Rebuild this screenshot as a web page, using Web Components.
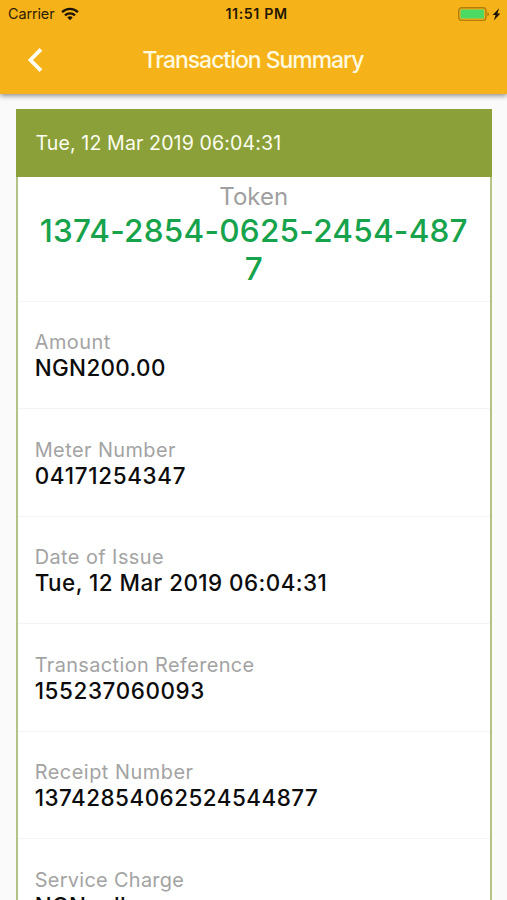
<!DOCTYPE html>
<html lang="en">
<head>
<meta charset="utf-8">
<title>Transaction Summary</title>
<style>
html,body{margin:0;height:100%;overflow:hidden;background:#fafafa}
body{font-family:Inter,"Noto Sans",sans-serif}
</style>
</head>
<body>
<summary-app></summary-app>

<template id="status-bar">
<style>
:host{display:grid;grid-template-columns:1fr auto 1fr;align-items:center;height:27px;color:#2b2007;padding:0 4px 0 8px}
.left,.right{display:flex;align-items:center}
.left{font-size:14.4px;letter-spacing:-.1px;gap:7px}
.time{font-size:14.2px;font-weight:600;letter-spacing:.62px;color:#1f1704;padding-left:2px}
.right{justify-content:flex-end}
svg{display:block}
</style>
<div class="left"><span>Carrier</span>
<svg width="18" height="14" viewBox="0 0 18 14" fill="none" stroke="#1c1503" stroke-width="2.3"><path d="M1.1 5.1a11.3 11.3 0 0 1 15.8 0"/><path d="M4 8.4a7.1 7.1 0 0 1 10 0"/><path d="M6.3 10.5a3.9 3.9 0 0 1 5.4 0L9 13.2z" fill="#1c1503" stroke="none"/></svg></div>
<div class="time">11:51 PM</div>
<div class="right">
<svg width="46" height="16" viewBox="0 0 46 16"><rect x="1.7" y="1.8" width="27.2" height="12.6" rx="2.8" fill="none" stroke="#b17d0d" stroke-width="1.4"/><rect x="3.5" y="3.6" width="23.6" height="9" rx="1.2" fill="#4cd964"/><path d="M30.4 6q1.6.4 1.6 2.1t-1.6 2.1z" fill="#a8770d"/><path d="M42.2 2.3l-6.6 6.7h3l-1.8 5.6 6.6-7.2h-3z" fill="#1a1303"/></svg></div>
</template>

<template id="app-bar">
<style>
:host{display:block;height:94px;background:#f6b319;box-shadow:0 2px 5px rgba(0,0,0,.42);position:relative;z-index:1}
.bar{display:grid;grid-template-columns:70px 1fr 71px;align-items:center;height:66px}
svg{display:block;justify-self:center}
h1{margin:0;text-align:center;color:#fff9df;font-size:23px;line-height:28px;font-weight:500;letter-spacing:-1.04px;white-space:nowrap}
</style>
<status-bar></status-bar>
<div class="bar">
<svg width="18" height="26" viewBox="0 0 18 26" fill="none" stroke="#fffdf2" stroke-width="3.8"><path d="M14.9 2.3L4.4 13l10.5 10.7"/></svg>
<h1><slot></slot></h1></div>
</template>

<template id="token-panel">
<style>
:host{display:block;height:124.6px;box-sizing:border-box;padding-top:5px;text-align:center;border-bottom:1px solid #f5f5f5}
.name{font-size:24px;line-height:30px;color:#a0a0a0}
.code{font-size:31.5px;line-height:38px;font-weight:500;letter-spacing:.24px;color:#16a34b;width:430px;margin:0 auto;white-space:nowrap}
</style>
<div class="name">Token</div>
<div class="code"><slot></slot></div>
</template>

<template id="detail-row">
<style>
:host{display:block;height:107.5px;box-sizing:border-box;padding:28.5px 0 0 17.2px;border-bottom:1px solid #f4f4f4;white-space:nowrap}
.label{font-size:19.9px;line-height:24px;color:#a3a3a3;letter-spacing:var(--label-tracking,.44px)}
.value{font-size:22.4px;line-height:28px;font-weight:500;color:#0c0c0c;letter-spacing:var(--value-tracking,.46px)}
</style>
<div class="label"><slot name="label"></slot></div>
<div class="value"><slot></slot></div>
</template>

<template id="receipt-card">
<style>
:host{display:block;margin:15px 15px 0 15.5px;height:1000px;background:#fff;border:solid #b4c285;box-sizing:border-box;border-width:0 2px}
header{margin:0 -2px;height:68px;box-sizing:border-box;padding-left:20px;background:#8ca039;color:#fbfdf0;font-size:19.6px;line-height:69px;letter-spacing:.1px}
</style>
<header><slot name="date"></slot></header>
<slot></slot>
</template>

<template id="summary-app">
<style>
:host{display:block;height:900px;overflow:hidden;background:#fafafa}
</style>
<app-bar>Transaction Summary</app-bar>
<receipt-card>
<span slot="date">Tue, 12 Mar 2019 06:04:31</span>
<token-panel>1374-2854-0625-2454-487<br>7</token-panel>
<detail-row style="--label-tracking:.5px;--value-tracking:.36px"><span slot="label">Amount</span>NGN200.00</detail-row>
<detail-row style="--value-tracking:.7px"><span slot="label">Meter Number</span>04171254347</detail-row>
<detail-row><span slot="label">Date of Issue</span>Tue, 12 Mar 2019 06:04:31</detail-row>
<detail-row style="--label-tracking:.39px;--value-tracking:.62px"><span slot="label">Transaction Reference</span>155237060093</detail-row>
<detail-row style="--label-tracking:.52px;--value-tracking:.5px"><span slot="label">Receipt Number</span>13742854062524544877</detail-row>
<detail-row style="--label-tracking:.32px;--value-tracking:.36px"><span slot="label">Service Charge</span>NGNnull</detail-row>
</receipt-card>
</template>

<script>
for (const name of ['status-bar', 'app-bar', 'token-panel', 'detail-row', 'receipt-card', 'summary-app']) {
  customElements.define(name, class extends HTMLElement {
    constructor() {
      super();
      this.attachShadow({ mode: 'open' }).append(document.getElementById(name).content.cloneNode(true));
    }
  });
}
</script>
</body>
</html>
